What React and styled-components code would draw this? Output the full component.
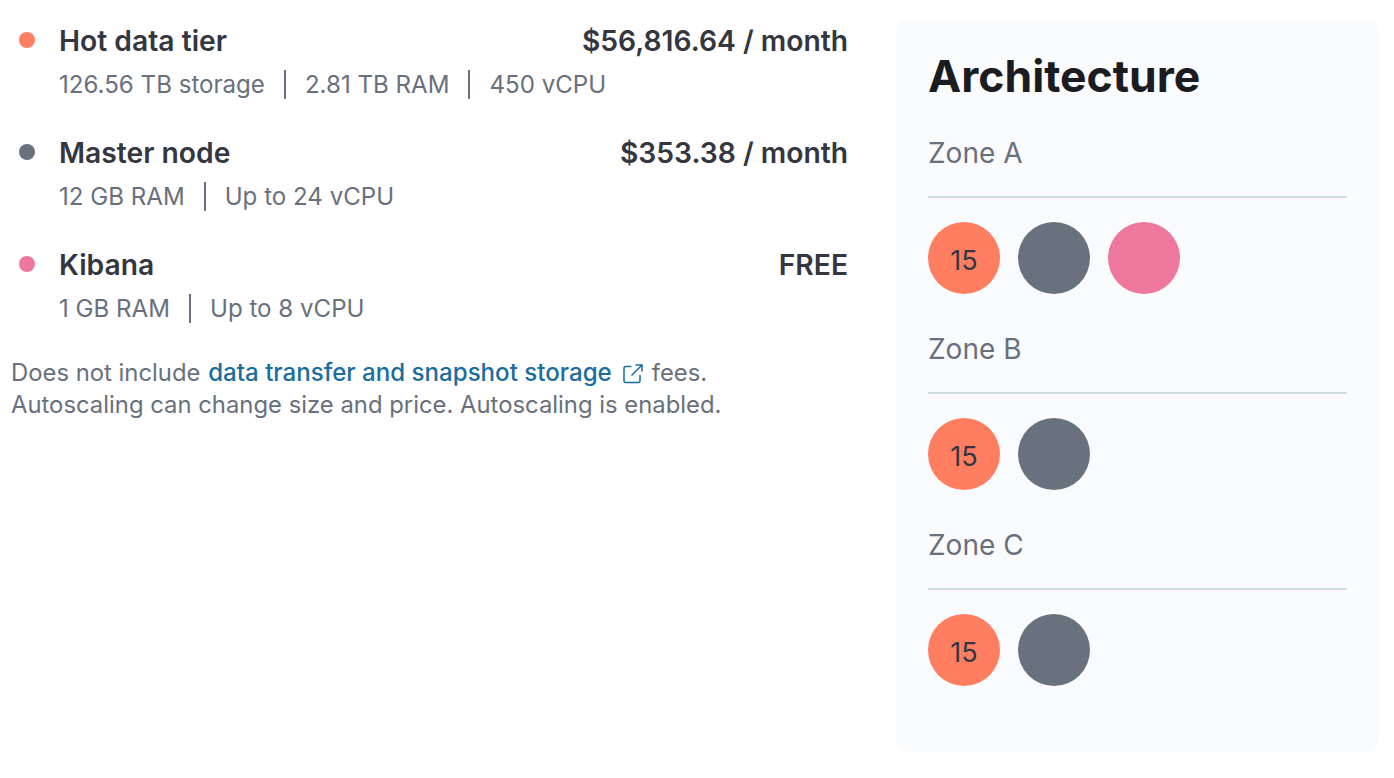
import React from 'react';
import styled, { createGlobalStyle } from 'styled-components';

const COLOR_TITLE = '#343741';
const COLOR_MUTED = '#69707d';
const HOT = '#ff7e62';
const MASTER = '#69717f';
const KIBANA = '#ee789d';

const GlobalStyle = createGlobalStyle`
  html, body {
    margin: 0;
    padding: 0;
    background: #fff;
    font-family: Inter, "Liberation Sans", sans-serif;
  }
`;

const Page = styled.div`
  width: 1394px;
  height: 778px;
  overflow: hidden;
  display: flex;
  align-items: flex-start;
  box-sizing: border-box;
  padding: 20px 15px 26px 11px;
`;

const Summary = styled.div`
  width: 837px;
  margin-right: 48px;
  padding-top: 1px;
  flex-shrink: 0;
`;

const Tier = styled.div`
  display: grid;
  grid-template-columns: 48px 1fr auto;
  margin-bottom: 33px;
`;

const Dot = styled.span`
  width: 16px;
  height: 16px;
  border-radius: 50%;
  margin: 11px 0 0 8px;
  background: ${props => props.color};
`;

const TierName = styled.div`
  font-size: 28.25px;
  line-height: 40px;
  font-weight: 600;
  color: ${COLOR_TITLE};
`;

const Price = styled(TierName)`
  text-align: right;
`;

const Specs = styled.div`
  grid-column: 2 / 4;
  display: flex;
  align-items: center;
  height: 32px;
  margin-top: 7px;
  font-size: 24.1px;
  color: ${COLOR_MUTED};
`;

const Spec = styled.span`
  & + & {
    margin-left: 19px;
    padding-left: 19px;
    border-left: 2px solid ${COLOR_MUTED};
  }
`;

const Note = styled.p`
  margin: 0;
  font-size: 23.85px;
  line-height: 32px;
  color: ${COLOR_MUTED};
`;

const Link = styled.a`
  margin-left: 1px;
  color: #1a6d9e;
  font-size: 24.1px;
  font-weight: 500;
  text-decoration: none;
`;

const External = styled.svg`
  width: 20px;
  height: 20px;
  margin: 0 9px 0 11px;
  vertical-align: -3px;
  fill: none;
  stroke: #1a6d9e;
  stroke-width: 1.5;
`;

const Panel = styled.aside`
  width: 483px;
  height: 732px;
  flex-shrink: 0;
  box-sizing: border-box;
  padding: 28px 32px 0;
  border-radius: 12px;
  background: #fafbfd;
`;

const Heading = styled.h2`
  margin: 0 0 29px;
  font-size: 44.5px;
  line-height: 56px;
  font-weight: 700;
  color: #1a1c21;
`;

const ZoneLabel = styled.div`
  font-size: 28px;
  line-height: 40px;
  color: ${COLOR_MUTED};
  padding-bottom: 23px;
  border-bottom: 2px solid #d0dce4;
`;

const Nodes = styled.div`
  display: flex;
  gap: 18px;
  padding: 24px 0 35px;
`;

const Node = styled.div`
  width: 72px;
  height: 72px;
  box-sizing: border-box;
  padding-top: 4px;
  border-radius: 50%;
  display: flex;
  align-items: center;
  justify-content: center;
  font-size: 27px;
  color: ${COLOR_TITLE};
  background: ${props => props.color};
`;

const tiers = [
  { name: 'Hot data tier', price: '$56,816.64 / month', color: HOT, specs: ['126.56 TB storage', '2.81 TB RAM', '450 vCPU'] },
  { name: 'Master node', price: '$353.38 / month', color: MASTER, specs: ['12 GB RAM', 'Up to 24 vCPU'] },
  { name: 'Kibana', price: 'FREE', color: KIBANA, specs: ['1 GB RAM', 'Up to 8 vCPU'] },
];

const zones = [
  { name: 'Zone A', kibana: true },
  { name: 'Zone B' },
  { name: 'Zone C' },
];

export default function App() {
  return (
    <Page>
      <GlobalStyle />
      <Summary>
        {tiers.map(tier => (
          <Tier key={tier.name}>
            <Dot color={tier.color} />
            <TierName>{tier.name}</TierName>
            <Price>{tier.price}</Price>
            <Specs>
              {tier.specs.map(spec => <Spec key={spec}>{spec}</Spec>)}
            </Specs>
          </Tier>
        ))}
        <Note>
          Does not include <Link>data transfer and snapshot storage</Link>
          <External viewBox="0 0 20 20">
            <path d="M8.5 2.5H2.5a1.5 1.5 0 0 0-1.5 1.5v13a1.5 1.5 0 0 0 1.5 1.5h13a1.5 1.5 0 0 0 1.5-1.5V11" />
            <path d="M12.5 1h6.5v6.5M19 1L8.5 11.5" />
          </External>
          fees.<br />
          Autoscaling can change size and price. Autoscaling is enabled.
        </Note>
      </Summary>
      <Panel>
        <Heading>Architecture</Heading>
        {zones.map(zone => (
          <div key={zone.name}>
            <ZoneLabel>{zone.name}</ZoneLabel>
            <Nodes>
              <Node color={HOT}>15</Node>
              <Node color={MASTER} />
              {zone.kibana && <Node color={KIBANA} />}
            </Nodes>
          </div>
        ))}
      </Panel>
    </Page>
  );
}
